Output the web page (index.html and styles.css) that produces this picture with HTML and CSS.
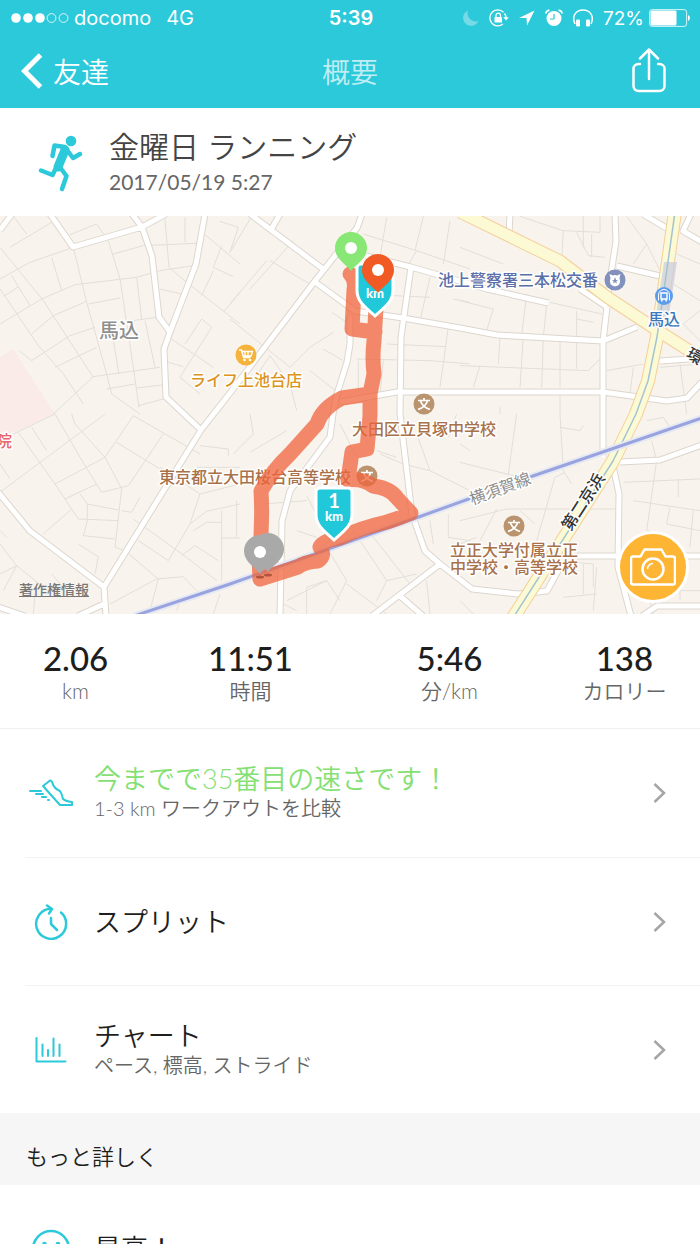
FILE: index.html
```html
<!DOCTYPE html>
<html lang="ja">
<head>
    <meta charset="UTF-8">
    <meta name="viewport" content="width=device-width, initial-scale=1.0">
    <title>概要</title>
    <link rel="stylesheet" href="styles.css">
</head>
<body>
<div class="app">
    <header class="top">
        <div class="status">
            <div class="status-left">
                <svg width="58" height="12" viewBox="0 0 58 12">
                    <g fill="#fff"><circle cx="5" cy="6" r="4.8"/><circle cx="17" cy="6" r="4.8"/><circle cx="29" cy="6" r="4.8"/></g>
                    <g fill="none" stroke="#fff" stroke-width=".8"><circle cx="40.500" cy="6" r="4.400"/><circle cx="52.500" cy="6" r="4.400"/></g>
                </svg>
                <span class="carrier">docomo</span>
                <span>4G</span>
            </div>
            <span class="clock">5:39</span>
            <div class="status-right">
                <svg class="dim" width="16" height="18" viewBox="0 0 16 18"><path d="M5 1.500A8 8 0 1 0 15.500 12 8.200 8.200 0 0 1 5 1.500z" fill="#fff"/></svg>
                <svg width="20" height="18" viewBox="0 0 20 18">
                    <path d="M14.500 3.200A8 8 0 1 0 14 15M15.500 4.500A8 8 0 0 1 17.200 9" fill="none" stroke="#fff" stroke-width="1.300"/>
                    <path d="M14.300 8.200h5.500l-2.700 3.300z" fill="#fff"/>
                    <rect x="5.500" y="8" width="7.500" height="5.500" rx=".6" fill="#fff"/>
                    <path d="M7 8V6.300a2.250 2.250 0 0 1 4.500 0V8" fill="none" stroke="#fff" stroke-width="1.200"/>
                </svg>
                <svg width="16" height="16" viewBox="0 0 16 16"><path d="M15.500.5L0 8h7.500L8 15.500z" fill="#fff"/></svg>
                <svg width="18" height="18" viewBox="0 0 18 18">
                    <circle cx="9" cy="9.500" r="7.500" fill="#fff"/>
                    <path d="M1 4.500A3 3 0 0 1 4.500 1.500M13.500 1.500a3 3 0 0 1 3.500 3" stroke="#fff" stroke-width="1.800" fill="none"/>
                    <path d="M9 5v5H5" fill="none" stroke="#2cc9da" stroke-width="1.200"/>
                </svg>
                <svg width="20" height="18" viewBox="0 0 20 18">
                    <path d="M2 15C-2 6 4 1 10 1s12 5 8 14" fill="none" stroke="#fff" stroke-width="1.500"/>
                    <rect x="3" y="10.500" width="4" height="7" rx="1.300" fill="#fff"/><rect x="13" y="10.500" width="4" height="7" rx="1.300" fill="#fff"/>
                </svg>
                <span class="percent">72%</span>
                <svg width="42" height="18" viewBox="0 0 42 18">
                    <rect x=".6" y=".6" width="37" height="16.800" rx="2.500" fill="none" stroke="#fff" stroke-width="1" opacity=".8"/>
                    <rect x="1.500" y="1.500" width="26" height="15" rx="1.500" fill="#fff"/>
                    <path d="M39 6v6q2-1 2-3t-2-3z" fill="#fff"/>
                </svg>
            </div>
        </div>
        <nav class="nav">
            <a class="back" href="#">
                <svg width="22" height="36" viewBox="0 0 22 36"><path d="M19.500 2L3.500 18l16 16" fill="none" stroke="#fff" stroke-width="5"/></svg>
                友達
            </a>
            <h1>概要</h1>
            <button class="share" type="button" aria-label="共有">
                <svg width="36" height="46" viewBox="0 0 36 46" fill="none" stroke="#fff" stroke-width="2.500" stroke-linecap="round" stroke-linejoin="round">
                    <path d="M9 16H7.500a5 5 0 0 0-5 5v17a5 5 0 0 0 5 5h21a5 5 0 0 0 5-5V21a5 5 0 0 0-5-5H27M18 31V2M9 10.500l9-9 9 9"/>
                </svg>
            </button>
        </nav>
    </header>

    <section class="workout">
        <svg class="runner" width="46" height="58" viewBox="0 0 46 58" fill="none" stroke="#2cc9da" stroke-linecap="round" stroke-linejoin="round">
            <circle cx="33" cy="7" r="5.300" fill="#2cc9da" stroke="none"/>
            <path d="M27 16L20 33" stroke-width="9"/>
            <path d="M27 13L16.500 11.500 14.500 22M29 16l6 8 7-4M19 32L14.500 41 3 36.500M21 32l7.500 10-4.500 13" stroke-width="4.500"/>
        </svg>
        <div>
            <h2>金曜日 ランニング</h2>
            <p>2017/05/19 5:27</p>
        </div>
    </section>

    <section class="map">
        <svg class="map-canvas" viewBox="0 0 700 398">
            <defs>
                <!-- main streets, drawn twice: casing and fill -->
                <path id="streets" d="M12-2L0 14M50-2L73 31 142 11 166-2M132-2L142 11 152 40 159 101 170 116M205-2L196 48 170 116 164 133 166 181 201 214M362-2L357 12 315 65 230 177 201 214 104 371 106 400M250-2L323 53M280-2L272 12M315 66L355 95 403 102 460 112 497 119 603 125 637 111M366 40L411 51 487 73 548 87M411 51L401 121 400 198 412 298 425 335 440 348 472 373 518 378 547 375 560 351M350 100L350 128 347 146 337 178 333 198 330 221 290 275 282 305 280 400M340 186L397 176 603 176 667 185 687 182 702 166M615-2L616 25 608 78M607 91L603 125 603 241M613 250L619 278 618 351 631 400M617 50L660 60M580 73L607 91M643-2L668 13M691-2L683 15 702 26M660 145L702 142M510-2L509 18M620 246L660 244 702 229M577 340H702M642 400L657 390H702M440 348L372 400M400 380L423 400M-2 276L30 315 104 371M78 400L104 388M-2 391L25 400"/>
                <path id="road-a" d="M460-4L560 45 607 81 657 114 704 144"/>
                <path id="road-b" d="M675-4L663 81 657 121 648 165 636 198 613 245 513 402"/>
                <g id="school">
                    <circle r="10.500" fill="#b9946f"/>
                    <path d="M0-6v2.500M-6-3.500H6M-3.500-3Q-1.500 3 6 5.500M3.500-3Q1.500 3-6 5.500" fill="none" stroke="#fff" stroke-width="1.700"/>
                </g>
                <path id="pin" d="M0 23C-4 17-16 11-16 0A16 16 0 0 1 16 0C16 11 4 17 0 23z"/>
                <path id="shield" d="M-14-26H14Q18-26 18-22V0C18 12 10 17 0 26-10 17-18 12-18 0V-22Q-18-26-14-26z" fill="#20c8da" stroke="#fff" stroke-width="3"/>
            </defs>

            <rect width="700" height="398" fill="#f8f4ed"/>
            <path d="M0 141L13 133 55 198 17 215 0 220z" fill="#fbebe8"/>

            <!-- side streets, grouped by tile -->
            <g class="lanes">
                <g transform="translate(0 -2) scale(.3333)">
                    <path d="M0 100L130 260 280 490M0 225L115 395 190 480 250 570M0 195L90 145 220 100 260 265 320 480 335 540 420 600M325 80L360 195 400 460 417 580M0 330L125 255 225 212 410 190 480 170 580 155M95 360L160 305 260 262M265 270L360 252M60 412L95 440 210 365 285 340M165 460L290 400M160 600L280 488 480 460M410 190L425 315M400 320L470 310M435 320L465 460M340 120L430 95 590 88M495 15L507 160 560 205 720 330M155 130L185 230M30 100L155 25M210 62L290 30M40 7L80 60M290 30L310 60M340 380L357 480M320 525L405 510M410 522L495 512M415 575L490 555M480 225L545 240M515 375L640 460M615 62L720 150M665 95L640 160 700 188M640 170L605 245M720 235L670 295M605 315L635 340 540 490 600 540M605 315L555 390M505 445L550 458M555 10V85M660 22L715 40 690 115M15 245L55 218M35 185L90 275"/>
                </g>
                <g transform="translate(230 -2) scale(.3333)">
                    <path d="M0 115L65 7M60 225L190 80M0 270L110 140M120 140L240 210M0 315L180 460 240 400 310 355M305 295L350 325M280 405L340 440M240 470L330 540M70 500L120 425 180 510 200 590M400 60L560 110 720 165M560 110L530 160M470 10L450 130M580 7L555 110M660 20L640 150M490 245L600 250M600 190L570 320M670 255L720 265M655 340L630 520M470 390L650 398M380 435L600 440 720 450M385 440V530M460 440L450 540"/>
                </g>
                <g transform="translate(460 -2) scale(.3333)">
                    <path d="M180 7L310 50 420 55M0 100L130 150M370 7V100M310 50L305 140M350 55L385 125 435 130M395 60V130M420 7V55M560 90L520 150M500 7L560 90 600 170M270 265L425 300M0 260L100 285 80 350M200 240L185 365M260 270L250 370M350 290V370M350 315L400 325M120 370L115 450M190 370L180 520M250 370L245 520M300 370V520M350 380V465M0 455L130 460 385 470 425 430M440 470L550 450M650 120L720 150M640 210L720 260M670 330L720 290M670 330L720 380M600 460L720 450M120 580V600M300 545V600M520 460L510 540M60 455L40 520M680 600L660 450"/>
                </g>
                <g transform="translate(0 198) scale(.3333)">
                    <path d="M0 80L40 60 165 0M95 40L140 110M55 55L165 210 235 315 355 320M165 0L240 130 305 235 385 215M215 0L225 30 315 130 365 225 345 400 375 410M0 235L315 0M165 210L315 130 400 5M400 5L600 120M350 85L480 165M385 215L490 60M195 255L290 210M240 240L262 270 355 288M262 270V320L250 365 345 375M365 290L395 295 420 250M130 360L215 285M235 390L295 428 285 480M0 390L50 455 155 540M0 480L50 455 10 530M155 480L190 520M330 570L470 495 550 488 590 530M375 410L475 495 450 590M415 380L505 440 570 330 600 240 720 210M600 240L480 160M600 95L685 105V125M590 160H720M570 330L620 292 720 270M580 350L620 325H665M665 290V500M665 372H720M545 425L585 395 655 440M400 315L560 430 650 500M530 590L540 560M640 600L660 540M0 150L30 195M0 350L20 370M100 600L105 540"/>
                </g>
                <g transform="translate(230 198) scale(.3333)">
                    <path d="M60 0L70 60 10 120M170 50L60 115M20 260V370M100 270L230 260M230 245L300 380 260 410M200 350L260 370M330 30L380 130M450 120L520 150 600 170M440 110L500 130M560 60L600 170 720 230M655 70L680 0M690 90L720 110M600 320L610 390M655 300V370L720 380M370 350L470 500 440 560M290 400L350 500 300 600M430 370L470 420 540 510M470 500L560 480M170 560L290 500 330 560M160 570L200 590M230 600V520L290 500M350 510L470 600M600 600L590 500"/>
                </g>
                <g transform="translate(460 198) scale(.3333)">
                    <path d="M170 0L145 180M0 145L100 170 200 195M300 0L310 170 335 210M300 40L360 50 370 35M0 320L140 285 470 285M110 285L60 380M230 380L285 190 315 175M560 20L610 10 630 40M575 80L590 140 560 350 600 360M490 205L720 195M520 260L720 290M655 195V250M630 280L620 330 720 350M340 445L400 450V520M310 550L410 540M370 450V540M0 560L40 600M410 460L400 590M560 530H720M660 440V560M540 440L580 600M225 330L180 290M700 290L690 400M0 390L50 370"/>
                </g>
            </g>

            <use href="#streets" class="line" stroke="#dcd6ce" stroke-width="7"/>
            <use href="#streets" class="line" stroke="#fff" stroke-width="5"/>
            <use href="#road-b" class="line" stroke="#f4cf9a" stroke-width="14"/>
            <use href="#road-a" class="line" stroke="#f4cf9a" stroke-width="13"/>
            <use href="#road-b" class="line" stroke="#fbfad4" stroke-width="12"/>
            <use href="#road-a" class="line" stroke="#fbfad4" stroke-width="11"/>
            <path d="M664 46H677L667 112H654z" fill="#c9cbe0" opacity=".7"/>
            <use href="#road-b" class="line" stroke="#a4c3d2" stroke-width="1.500"/>
            <path d="M702 202L530 261 413 303 230 368 134 400" class="line" stroke="#e6e9f2" stroke-width="7"/>
            <path d="M702 202L530 261 413 303 230 368 134 400" class="line" stroke="#99a3df" stroke-width="3"/>

            <g transform="translate(246 139)">
                <circle r="10.500" fill="#f5b33c"/>
                <path d="M-7-5H-4.500L-2.500 2.500H4.500M-4-3.500H6.500L5 1H-3M-1-3V1M2-3V1" fill="none" stroke="#fff" stroke-width="1.300"/>
                <circle cx="-1.500" cy="5" r="1.300" fill="#fff"/><circle cx="4" cy="5" r="1.300" fill="#fff"/>
            </g>
            <use href="#school" x="424" y="188"/>
            <use href="#school" x="367" y="260"/>
            <use href="#school" x="514" y="310"/>
            <g transform="translate(615 64)">
                <circle r="10.500" fill="#8190bd"/>
                <path d="M-5.500-6L-2-4.500Q0-5.500 2-4.500L5.500-6 4.500-2Q7 5 0 6.500-7 5-4.500-2z" fill="#fff"/>
                <path d="M0-3L1 0H3L1.300 1.300 2 3.500 0 2.200-2 3.500-1.300 1.300-3 0H-1z" fill="#8190bd"/>
            </g>
            <g transform="translate(664 80)">
                <circle r="9" fill="#5c9cec"/>
                <path d="M-5.500 4.500V-1A5.500 5.500 0 0 1 5.500-1V4.500" fill="none" stroke="#fff" stroke-width="1"/>
                <path d="M-3-3H3V3H-3zM-2.500 5.500L-1.500 3M2.500 5.500L1.500 3" fill="none" stroke="#fff" stroke-width="1.400"/>
            </g>

            <g class="label" text-anchor="middle">
                <text class="area" x="119" y="122">馬込</text>
                <text class="shop" x="246" y="170">ライフ上池台店</text>
                <text class="police" x="518" y="70">池上警察署三本松交番</text>
                <text class="station" x="664" y="109">馬込</text>
                <text class="edu" x="424" y="219">大田区立貝塚中学校</text>
                <text class="edu" x="255" y="267">東京都立大田桜台高等学校</text>
                <text class="edu" x="514" y="340">立正大学付属立正</text>
                <text class="edu" x="514" y="357">中学校・高等学校</text>
                <text class="hospital" x="4" y="231">院</text>
                <text class="rail" transform="translate(502 278) rotate(-20)">横須賀線</text>
                <text class="road" transform="translate(588 289) rotate(-57)">第二京浜</text>
                <text class="road" transform="translate(692 145) rotate(30)">環</text>
            </g>

            <path class="route" d="M350 58Q356 64 354 74L352 113 375 116M376 92L374 125Q372 142 374 158L370 178 370 200 367 233 352 236 348 264Q362 262 373 270 390 272 397 282L411 297Q400 302 387 306 360 312 340 322 324 324 320 331 326 340 318 345 304 346 298 351L260 363 259 341Q263 310 261 275 272 255 290 238L317 208Q322 192 342 182L370 178"/>

            <use href="#shield" x="375" y="74"/>
            <text class="mark" x="375" y="82" text-anchor="middle">km</text>
            <use href="#shield" x="334" y="298"/>
            <text class="mark mark-num" x="334" y="292" text-anchor="middle">1</text>
            <text class="mark" x="334" y="305" text-anchor="middle">km</text>

            <g fill="#a9a9a9">
                <ellipse cx="260" cy="361" rx="4" ry="1.500" fill="#b0553c"/>
                <ellipse cx="268" cy="359" rx="4" ry="1.500" fill="#b0553c"/>
                <use href="#pin" x="268" y="333"/><use href="#pin" x="260" y="335"/>
            </g>
            <use href="#pin" x="351" y="32" fill="#88e775"/>
            <use href="#pin" x="378" y="54" fill="#f15a24"/>
            <g fill="#fff"><circle cx="260" cy="336" r="6"/><circle cx="351" cy="32" r="6"/><circle cx="378" cy="54" r="6"/></g>
        </svg>
        <a class="legal" href="#">著作権情報</a>
        <button class="camera" type="button" aria-label="写真を追加">
            <svg width="46" height="38" viewBox="0 0 46 38" fill="none" stroke="#fff" stroke-width="2.500" stroke-linejoin="round">
                <path d="M3 8.500h7.500l4-7h17l4 7H43a2 2 0 0 1 2 2V34.500a2 2 0 0 1-2 2H3a2 2 0 0 1-2-2V10.500a2 2 0 0 1 2-2z"/>
                <circle cx="23" cy="21" r="10.500"/><path d="M17.500 21a5.500 5.500 0 0 1 5.500-5.500" stroke-width="1.500"/>
            </svg>
        </button>
    </section>

    <dl class="stats">
        <div><dd>2.06</dd><dt>km</dt></div>
        <div><dd>11:51</dd><dt>時間</dt></div>
        <div><dd>5:46</dd><dt>分/km</dt></div>
        <div><dd>138</dd><dt>カロリー</dt></div>
    </dl>

    <ul class="rows">
        <li>
            <a class="row" href="#">
                <svg class="row-icon" width="44" height="28" viewBox="0 0 44 28" fill="none" stroke="#2cc9da" stroke-width="2" stroke-linecap="round" stroke-linejoin="round">
                    <path d="M14 7L21 1.500Q23 1.500 24 5.500 26 10 31 12 33 15 34 20 36 22 43 23V26H31z"/>
                    <path d="M1 12H12M7 15H14M13 18H17M19 21H20"/>
                </svg>
                <span class="row-text"><strong class="rank">今までで35番目の速さです！</strong><small>1-3 km ワークアウトを比較</small></span>
                <svg class="chevron" width="13" height="22" viewBox="0 0 13 22"><path d="M1.500 2l9.500 9-9.500 9"/></svg>
            </a>
        </li>
        <li>
            <a class="row" href="#">
                <svg class="row-icon" width="34" height="36" viewBox="0 0 34 36" fill="none" stroke="#2cc9da" stroke-width="2.500" stroke-linecap="round" stroke-linejoin="round">
                    <path d="M27 8.500A15 15 0 1 1 17 4.800M13 1.500L18 5 15 9.500M17 14v6l6 6"/>
                </svg>
                <span class="row-text"><strong>スプリット</strong></span>
                <svg class="chevron" width="13" height="22" viewBox="0 0 13 22"><path d="M1.500 2l9.500 9-9.500 9"/></svg>
            </a>
        </li>
        <li>
            <a class="row" href="#">
                <svg class="row-icon" width="32" height="26" viewBox="0 0 32 26" fill="none" stroke="#2cc9da" stroke-width="2" stroke-linecap="round" stroke-linejoin="round">
                    <path d="M1.500 1V24.500H30.500M7.500 7.500V19M13 13V19M18.500 1.500V19M24.500 7.500V19"/>
                </svg>
                <span class="row-text"><strong>チャート</strong><small>ペース, 標高, ストライド</small></span>
                <svg class="chevron" width="13" height="22" viewBox="0 0 13 22"><path d="M1.500 2l9.500 9-9.500 9"/></svg>
            </a>
        </li>
    </ul>

    <h3 class="more">もっと詳しく</h3>

    <ul class="rows">
        <li>
            <a class="row" href="#">
                <svg class="row-icon" width="40" height="40" viewBox="0 0 40 40" fill="none" stroke="#2cc9da" stroke-width="2.500" stroke-linecap="round">
                    <circle cx="20" cy="20" r="18"/><path d="M11 24q9 12 18 0"/>
                    <g fill="#2cc9da" stroke="none"><circle cx="13.500" cy="15" r="2.300"/><circle cx="27" cy="15" r="2.300"/></g>
                </svg>
                <span class="row-text"><strong>最高！</strong></span>
            </a>
        </li>
    </ul>
</div>
</body>
</html>
```
FILE: styles.css
```css
* {
    box-sizing: border-box;
}
body {
    margin: 0;
    background-color: #fff;
    color: #1e1e1e;
    font-family: Lato, "Noto Sans CJK JP", sans-serif;
}
h1, h2, h3, p, dl, dd, ul {
    margin: 0;
    padding: 0;
    font-weight: 350;
}
a {
    color: inherit;
    text-decoration: none;
}
button {
    border: none;
    padding: 0;
    background: none;
    cursor: pointer;
}
svg {
    display: block;
    flex: none;
}
.app {
    height: 100vh;
    overflow: hidden;
}

/* Header */
.top {
    background-color: #2cc9da;
    color: #fff;
}
.status {
    display: grid;
    grid-template-columns: 1fr auto 1fr;
    align-items: center;
    height: 36px;
    padding: 0 9px 0 11px;
    font-family: Inter, sans-serif;
    font-size: 20px;
}
.status-left, .status-right {
    display: flex;
    align-items: center;
}
.status-left {
    gap: 5px;
}
.carrier {
    margin-right: 10px;
}
.clock {
    font-weight: 600;
}
.status-right {
    justify-content: flex-end;
    gap: 10px;
}
.dim {
    opacity: 0.35;
}
.percent {
    margin-right: -5px;
    font-size: 19px;
}
.nav {
    display: grid;
    grid-template-columns: 1fr auto 1fr;
    align-items: center;
    height: 72px;
    padding: 0 33px 2px 21px;
}
.nav h1 {
    padding-left: 12px;
    font-size: 28px;
    opacity: 0.7;
}
.back {
    display: flex;
    align-items: center;
    gap: 10px;
    font-size: 28px;
    font-weight: 350;
}
.share {
    justify-self: end;
}

/* Workout title */
.workout {
    display: flex;
    align-items: center;
    gap: 25px;
    height: 108px;
    padding: 2px 38px 0;
}
.workout h2 {
    font-size: 30px;
    line-height: 38px;
    color: #444;
}
.workout p {
    font-size: 21px;
    line-height: 34px;
    font-weight: 400;
    color: #666;
}

/* Map */
.map {
    position: relative;
}
.map-canvas {
    width: 100%;
    height: auto;
}
.line {
    fill: none;
    stroke-linejoin: round;
}
.lanes path {
    fill: none;
    stroke: #e2dfd8;
    stroke-width: 3px;
}
.label {
    font-family: "Noto Sans CJK JP", sans-serif;
    font-size: 16px;
    font-weight: 500;
    paint-order: stroke;
    stroke: #fff;
    stroke-width: 3px;
    stroke-linejoin: round;
}
.area {
    font-size: 20px;
    fill: #8f8f8f;
}
.shop {
    fill: #dc9420;
}
.police {
    fill: #5a6ea8;
}
.station {
    fill: #3d78bd;
}
.edu {
    fill: #a8714a;
}
.hospital {
    fill: #e8646c;
}
.rail {
    fill: #8d8d8d;
    font-weight: 400;
}
.road {
    fill: #333;
}
.route {
    fill: none;
    stroke: #f0643c;
    stroke-width: 15px;
    stroke-linecap: round;
    stroke-linejoin: round;
    opacity: 0.75;
}
.mark {
    fill: #fff;
    font-size: 13px;
    font-weight: 900;
}
.mark-num {
    font-size: 20px;
    font-weight: 700;
}
.legal {
    position: absolute;
    left: 19px;
    bottom: 15px;
    font-size: 14px;
    font-weight: 500;
    color: #777;
    text-decoration: underline;
}
.camera {
    position: absolute;
    right: 11px;
    bottom: 11px;
    display: flex;
    align-items: center;
    justify-content: center;
    width: 72px;
    height: 72px;
    border: 3px solid #fff;
    border-radius: 50%;
    background-color: #ffb534;
}

/* Totals */
.stats {
    display: grid;
    grid-template-columns: 19fr 25fr 25fr 19fr;
    height: 115px;
    padding-top: 24px;
    border-bottom: 1px solid #f0f0f0;
    text-align: center;
}
.stats div {
    display: flex;
    flex-direction: column;
}
.stats dd {
    font-size: 33px;
    line-height: 40px;
    font-weight: 500;
}
.stats dt {
    font-size: 21px;
    line-height: 26px;
    font-weight: 350;
    color: #666;
}

/* List rows */
.rows {
    list-style: none;
    padding-left: 25px;
}
.rows li {
    height: 128px;
}
.rows li + li {
    border-top: 1px solid #f3f3f3;
}
.row {
    display: grid;
    grid-template-columns: 52px 1fr auto;
    align-items: center;
    column-gap: 17px;
    height: 100%;
    padding-right: 34px;
}
.row-icon {
    justify-self: center;
}
.row-text {
    display: flex;
    flex-direction: column;
}
.row-text strong {
    font-size: 27px;
    line-height: 30px;
    font-weight: 350;
}
.row-text .rank {
    color: #84e072;
}
.row-text small {
    font-size: 20px;
    line-height: 28px;
    font-weight: 350;
    color: #666;
}
.chevron path {
    fill: none;
    stroke: #a5a5a5;
    stroke-width: 2.5px;
}
.more {
    padding: 28px 26px 12px;
    background-color: #f6f6f6;
    font-size: 22px;
    line-height: 32px;
}
```
